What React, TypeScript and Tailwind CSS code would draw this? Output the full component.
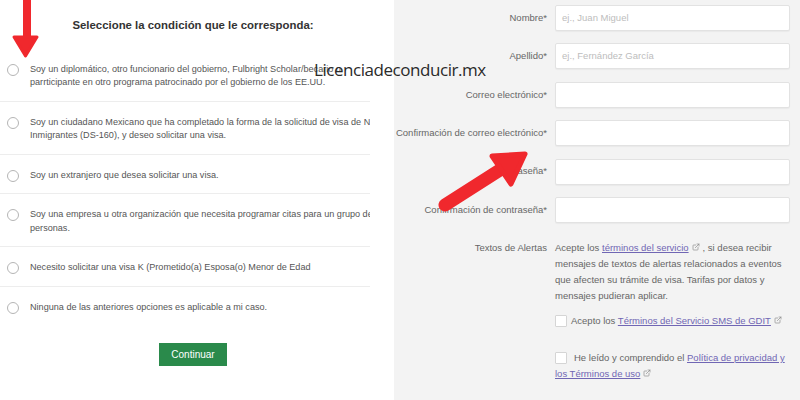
import React from 'react';
import { ExternalLink } from 'lucide-react';

const options: string[][] = [
  [
    'Soy un diplomático, otro funcionario del gobierno, Fulbright Scholar/becario o',
    'parrticipante en otro programa patrocinado por el gobierno de los EE.UU.',
  ],
  [
    'Soy un ciudadano Mexicano que ha completado la forma de la solicitud de visa de No',
    'Inmigrantes (DS-160), y deseo solicitar una visa.',
  ],
  ['Soy un extranjero que desea solicitar una visa.'],
  [
    'Soy una empresa u otra organización que necesita programar citas para un grupo de',
    'personas.',
  ],
  ['Necesito solicitar una visa K (Prometido(a) Esposa(o) Menor de Edad'],
  ['Ninguna de las anteriores opciones es aplicable a mi caso.'],
];

const fields = [
  { label: 'Nombre*', placeholder: 'ej., Juan Miguel' },
  { label: 'Apellido*', placeholder: 'ej., Fernández García' },
  { label: 'Correo electrónico*', placeholder: '' },
  { label: 'Confirmación de correo electrónico*', placeholder: '' },
  { label: 'Contraseña*', placeholder: '' },
  { label: 'Confirmación de contraseña*', placeholder: '' },
];

function Ext() {
  return <ExternalLink className="inline w-[8px] h-[8px] text-[#888] mx-[3px] -mt-[2px]" strokeWidth={2} />;
}

function Link({ children }: { children: React.ReactNode }) {
  return <span className="text-[#7066b4] underline underline-offset-1">{children}</span>;
}

export default function App() {
  return (
    <div className="relative w-[800px] h-[400px] overflow-hidden flex font-['Liberation_Sans',Arial,sans-serif]">
      {/* selección de condición */}
      <div className="w-[394px] h-full bg-white">
        <div className="w-[386px] h-[48.7px] pt-[18px] text-center text-[11.4px] leading-[14px] font-bold text-[#333]">
          Seleccione la condición que le corresponda:
        </div>

        <div className="w-[370px] overflow-hidden">
          {options.map((lines, i) => (
            <div
              key={i}
              className={`flex items-start pl-[7px] pt-[14px] pb-[11px] ${
                i < options.length - 1 ? 'border-b border-[#ededed]' : ''
              }`}
            >
              <div className="w-[12px] h-[12px] mt-[1px] rounded-full border border-[#b5b5b5] bg-white shrink-0" />
              <div className="ml-[11px] text-[9.1px] leading-[13.5px] text-[#555] whitespace-nowrap">
                {lines.map((l, j) => (
                  <div key={j}>{l}</div>
                ))}
              </div>
            </div>
          ))}
        </div>

        <div className="w-[386px] flex justify-center mt-[18px]">
          <button className="w-[68px] h-[23px] bg-[#2a8a4b] text-white text-[10px]">Continuar</button>
        </div>
      </div>

      {/* formulario */}
      <div className="flex-1 h-full bg-[#f3f3f3] pt-[5px] text-[9.5px] text-[#666]">
        <div className="flex flex-col gap-[12.4px]">
          {fields.map((f) => (
            <div key={f.label} className="flex items-center h-[26px]">
              <div className="w-[154px] text-right pr-[1px] whitespace-nowrap">{f.label}</div>
              <div className="ml-[7px] w-[235px] h-[26px] bg-white border border-[#e2e2e2] rounded-[2px] shadow-[0_1px_1px_rgba(0,0,0,0.04)] flex items-center pl-[6px] text-[#bdbdbd]">
                {f.placeholder}
              </div>
            </div>
          ))}
        </div>

        <div className="flex mt-[17px] leading-[16px]">
          <div className="w-[154px] text-right pr-[1px]">Textos de Alertas</div>
          <div className="ml-[7px] w-[235px] whitespace-nowrap">
            <div>
              Acepte los <Link>términos del servicio</Link>
              <Ext />, si desea recibir
            </div>
            <div>mensajes de textos de alertas relacionados a eventos</div>
            <div>que afecten su trámite de visa. Tarifas por datos y</div>
            <div>mensajes pudieran aplicar.</div>

            <div className="flex items-center mt-[9px]">
              <div className="w-[12px] h-[12px] bg-white border border-[#d5d5d5] rounded-[1px]" />
              <span className="ml-[4px]">
                Acepto los <Link>Términos del Servicio SMS de GDIT</Link>
                <Ext />
              </span>
            </div>

            <div className="mt-[21px]">
              <div className="flex items-center">
                <div className="w-[12px] h-[12px] bg-white border border-[#d5d5d5] rounded-[1px]" />
                <span className="ml-[7px]">
                  He leído y comprendido el <Link>Política de privacidad y</Link>
                </span>
              </div>
              <div>
                <Link>los Términos de uso</Link>
                <Ext />
              </div>
            </div>
          </div>
        </div>
      </div>

      {/* marca de agua */}
      <div className="absolute left-[314px] top-[58px] text-[17px] leading-[24px] tracking-[-0.45px] text-[#2a2a2a] font-['Open_Sans',sans-serif]">
        Licenciadeconducir.mx
      </div>

      {/* flechas */}
      <svg className="absolute inset-0 pointer-events-none" width="800" height="400" viewBox="0 0 800 400">
        <g fill="#f0282d" stroke="#f0282d" strokeLinejoin="round">
          <rect x="23" y="-2" width="8" height="40" stroke="none" />
          <polygon points="14,37 37,37 25.5,56" strokeWidth="3" />
          <line x1="445" y1="205" x2="503" y2="168" strokeWidth="13" strokeLinecap="round" />
          <polygon points="525,154 492,156 511,184" strokeWidth="5" />
        </g>
      </svg>
    </div>
  );
}
